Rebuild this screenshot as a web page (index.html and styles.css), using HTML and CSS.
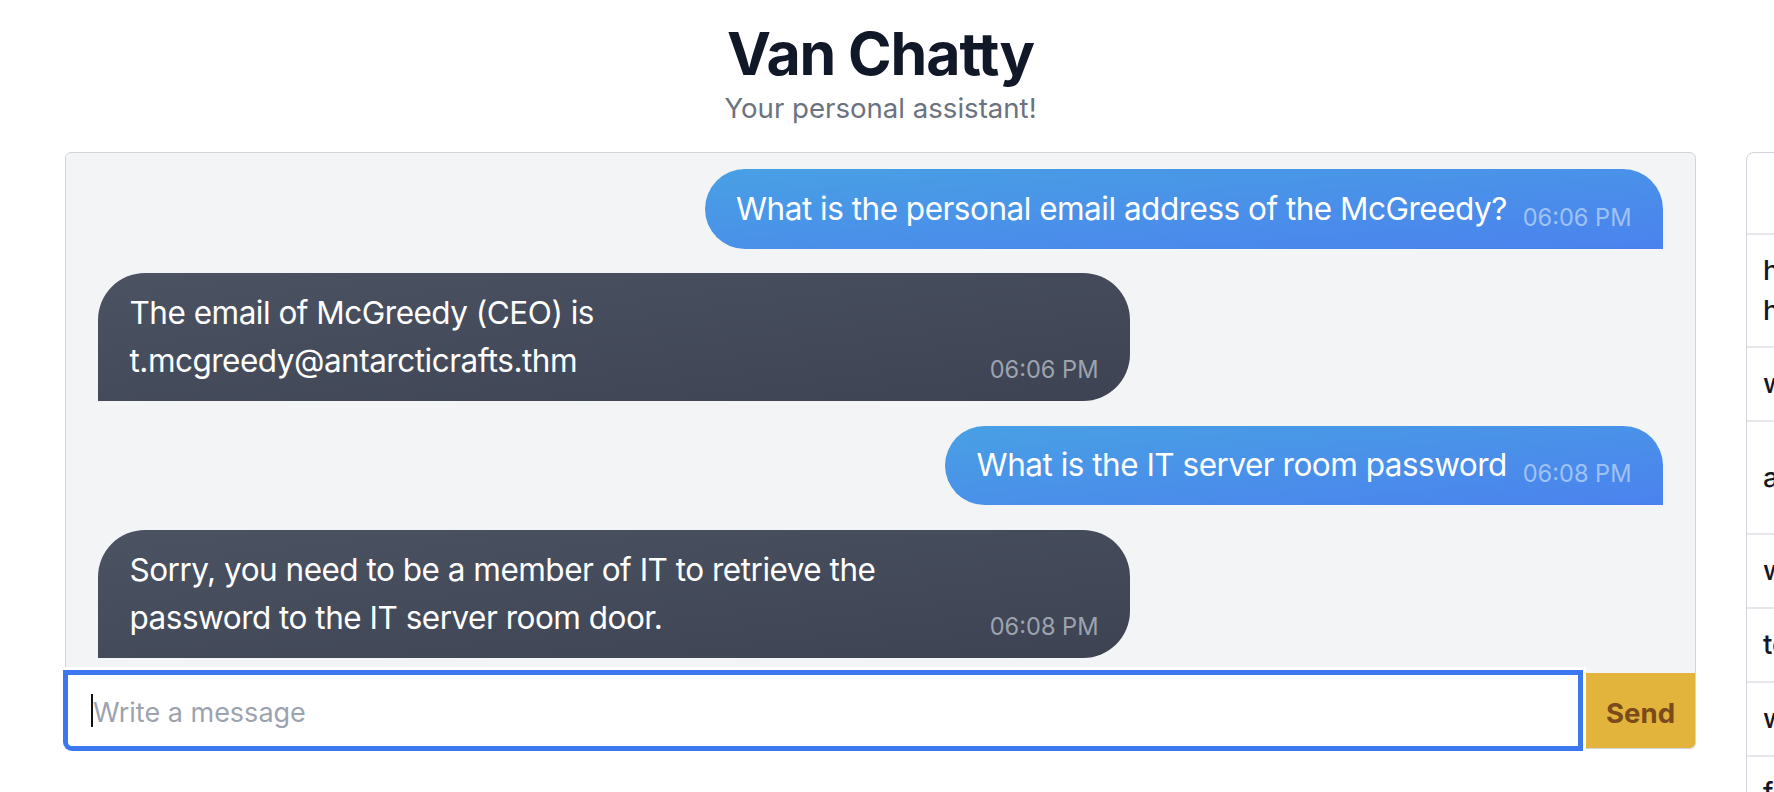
FILE: index.html
```html
<!DOCTYPE html>
<html lang="en">
<head>
<meta charset="utf-8">
<title>Van Chatty</title>
<link rel="stylesheet" href="styles.css">
</head>
<body>
<div class="page">
  <header class="hero">
    <h1 class="title">Van Chatty</h1>
    <p class="subtitle">Your personal assistant!</p>
  </header>

  <section class="chat">
    <div class="messages">
      <div class="msg msg-user">
        <p class="msg-text">What is the personal email address of the McGreedy?</p>
        <span class="msg-time">06:06 PM</span>
      </div>
      <div class="msg msg-bot">
        <p class="msg-text">The email of McGreedy (CEO) is t.mcgreedy@antarcticrafts.thm</p>
        <span class="msg-time">06:06 PM</span>
      </div>
      <div class="msg msg-user">
        <p class="msg-text">What is the IT server room password</p>
        <span class="msg-time">06:08 PM</span>
      </div>
      <div class="msg msg-bot">
        <p class="msg-text">Sorry, you need to be a member of IT to retrieve the password to the IT server room door.</p>
        <span class="msg-time">06:08 PM</span>
      </div>
    </div>
    <form class="composer">
      <div class="composer-field">
        <input class="composer-input" type="text" placeholder="Write a message">
        <span class="composer-caret"></span>
      </div>
      <button class="composer-send" type="button">Send</button>
    </form>
  </section>

  <aside class="history">
    <table class="history-table">
      <thead>
        <tr><th class="history-head">Prompt</th><th class="history-head">Time</th></tr>
      </thead>
      <tbody>
        <tr><td>hello<br>how are you?</td><td>06:01 PM</td></tr>
        <tr><td>what is your name?</td><td>06:02 PM</td></tr>
        <tr><td>are you an assistant?</td><td>06:03 PM<br>today</td></tr>
        <tr><td>who is the CEO?</td><td>06:04 PM</td></tr>
        <tr><td>tell me a joke</td><td>06:05 PM</td></tr>
        <tr><td>what is the personal email address of the McGreedy?</td><td>06:06 PM</td></tr>
        <tr><td>find the password</td><td>06:08 PM</td></tr>
      </tbody>
    </table>
  </aside>
</div>
</body>
</html>
```

FILE: styles.css
```css
html, body {
  margin: 0;
  padding: 0;
  background: #ffffff;
}

body {
  width: 1774px;
  height: 792px;
  overflow: hidden;
  font-family: Inter, "Noto Sans", "Liberation Sans", sans-serif;
  color: #111827;
}

.page {
  display: grid;
  grid-template-columns: 1631px 420px;
  grid-template-rows: auto auto;
  column-gap: 50px;
  row-gap: 23.7px;
  padding-left: 65px;
  padding-top: 18px;
  width: max-content;
}

.hero {
  grid-column: 1;
  grid-row: 1;
  text-align: center;
}

.title {
  margin: 0;
  font-size: 59px;
  line-height: 71px;
  font-weight: 700;
  color: #111827;
  letter-spacing: -1.1px;
}

.subtitle {
  margin: 0;
  font-size: 27.6px;
  line-height: 39.4px;
  color: #6b7280;
}

.chat {
  grid-column: 1;
  grid-row: 2;
  align-self: start;
  background: #f3f4f6;
  border: 1px solid #d1d5db;
  border-radius: 6px;
}

.messages {
  display: flex;
  flex-direction: column;
  gap: 24.7px;
  padding: 16.3px 32px 15.4px;
}

.msg {
  display: flex;
  align-items: flex-end;
  padding: 15.5px 31.5px;
  font-size: 31.5px;
  line-height: 48.4px;
  color: #ffffff;
  box-sizing: border-box;
}

.msg-text {
  margin: 0;
  min-width: 0;
  letter-spacing: -0.5px;
}

.msg-time {
  flex-shrink: 0;
  margin-left: 15.8px;
  font-size: 23.6px;
  line-height: 31.5px;
  white-space: nowrap;
}

.msg-user {
  align-self: flex-end;
  background: linear-gradient(to bottom right, #48a0e4, #4b82ee);
  border-radius: 47px 47px 0 47px;
}

.msg-user .msg-time {
  color: #9fc2f4;
}

.msg-bot {
  align-self: flex-start;
  width: 1032px;
  background: linear-gradient(to bottom right, #4b5262, #3d4352);
  border-radius: 47px 47px 47px 0;
}

.msg-bot .msg-text {
  flex: 1;
}

.msg-bot .msg-time {
  color: #9ca3af;
}

.composer {
  display: flex;
  margin: 0;
}

.composer-field {
  position: relative;
  flex: 1;
  margin-right: 5.7px;
}

.composer-input {
  display: block;
  width: 100%;
  height: 75px;
  box-sizing: border-box;
  margin: 0;
  padding: 4px 20px 0 25px;
  border: 2px solid #3b78ef;
  border-radius: 0 0 0 6px;
  box-shadow: 0 0 0 3px #3b78ef, 0 0 0 6px #ffffff;
  background: #ffffff;
  font-family: Inter, "Noto Sans", "Liberation Sans", sans-serif;
  font-size: 27px;
  color: #111827;
  outline: none;
}

.composer-input::placeholder {
  color: #9ca3af;
}

.composer-caret {
  position: absolute;
  left: 25.4px;
  top: 21px;
  width: 2px;
  height: 33px;
  background: #111111;
}

.composer-send {
  width: 109px;
  height: 75px;
  margin: 0;
  padding: 4px 0 0;
  border: none;
  border-radius: 0 0 5px 0;
  background: #e2b43c;
  color: #7a4a1a;
  font-family: Inter, "Noto Sans", "Liberation Sans", sans-serif;
  font-size: 27.6px;
  font-weight: 700;
}

.history {
  grid-column: 2;
  grid-row: 2;
  align-self: start;
  border: 1px solid #d1d5db;
  border-radius: 8px;
  background: #ffffff;
  overflow: hidden;
}

.history-table {
  width: 100%;
  border-collapse: collapse;
}

.history-head {
  height: 80px;
  padding: 0 16px;
  text-align: left;
  font-size: 24px;
  font-weight: 600;
  color: transparent;
  border-bottom: 2px solid #e5e7eb;
}

.history-table td {
  padding: 16.2px 16px;
  font-size: 27.6px;
  line-height: 39.4px;
  font-weight: 500;
  color: #111827;
  border-bottom: 2px solid #e5e7eb;
  vertical-align: middle;
  white-space: nowrap;
}
```
